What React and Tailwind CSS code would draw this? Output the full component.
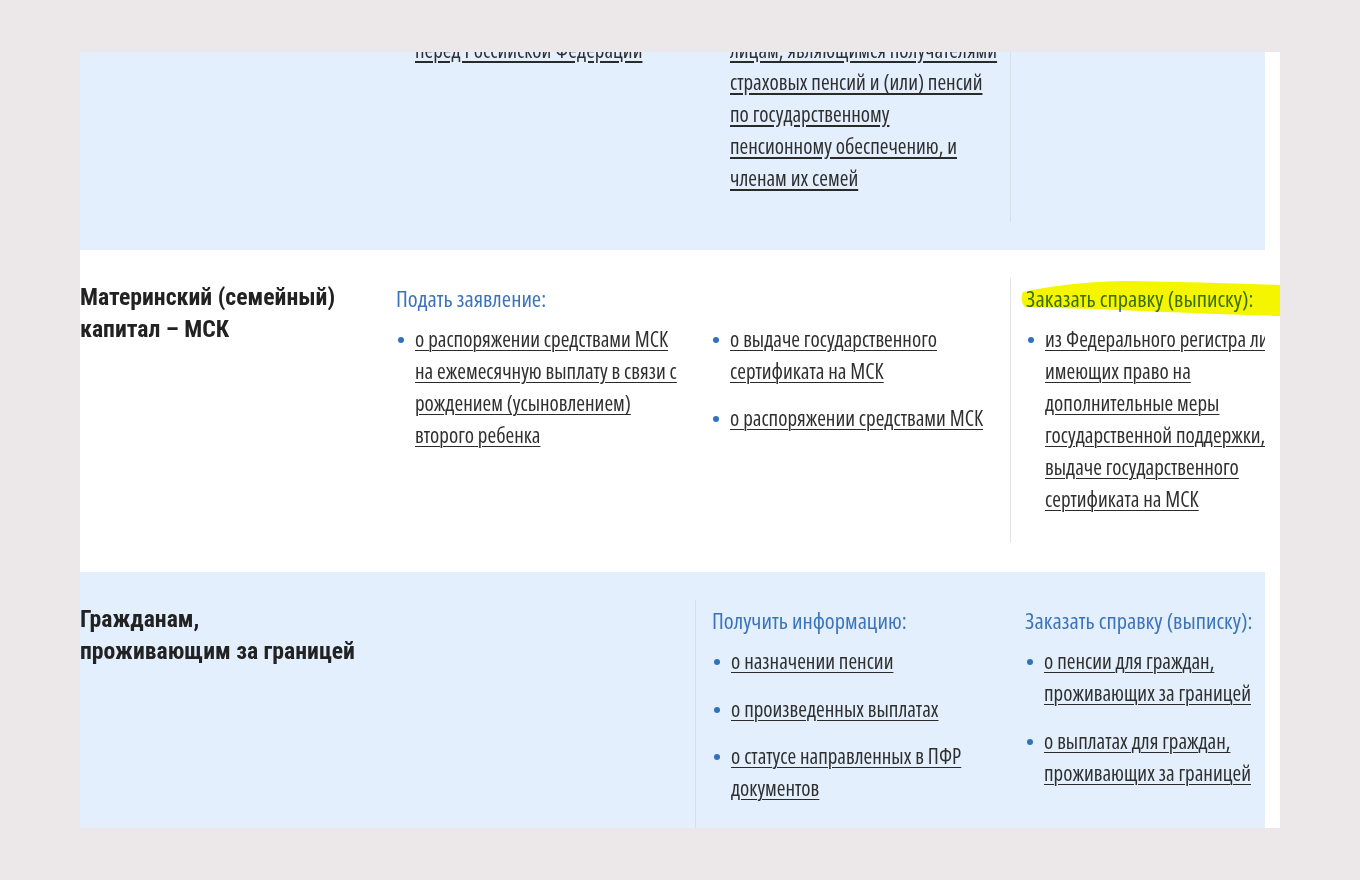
const body = "font-['Open_Sans',sans-serif] font-stretch-condensed";
const head = "font-['Roboto',sans-serif] font-stretch-condensed";

function Item({ lines, first, gap = "mt-[15px]" }) {
  return (
    <li className={"relative pl-[19px] " + (first ? "" : gap)}>
      <span className="absolute left-[2px] top-[14px] h-[6px] w-[6px] rounded-full bg-[#2f73bd]" />
      <span className="underline decoration-[#2a2a2a] decoration-1 underline-offset-[3px]">
        {lines.map((l, i) => (
          <span key={i}>
            {l}
            {i < lines.length - 1 && <br />}
          </span>
        ))}
      </span>
    </li>
  );
}

function Heading({ children }) {
  return (
    <div className={body + " text-[22.5px] leading-[42px] text-[#3b74bb] whitespace-nowrap"}>
      {children}
    </div>
  );
}

function List({ children }) {
  return (
    <ul className={body + " mt-[3px] text-[21px] leading-[32px] text-[#2f2f2f] whitespace-nowrap"}>
      {children}
    </ul>
  );
}

function Title({ lines }) {
  return (
    <div className={head + " pt-[3px] text-[23.7px] leading-[32px] font-bold text-[#222] whitespace-nowrap"}>
      {lines.map((l, i) => (
        <div key={i}>{l}</div>
      ))}
    </div>
  );
}

export default function App() {
  return (
    <div className="min-h-screen bg-[#ece8e9] pt-[52px]">
      <div className="relative ml-[80px] h-[776px] w-[1200px] overflow-hidden bg-white">
        {/* row 1 - tail of the previous section */}
        <div className="w-[1185px] overflow-hidden bg-[#e3effc] pb-7">
          <div className="-mt-[18px] grid grid-cols-[300px_315px_315px_315px]">
            <div />
            <div className="pl-4 pb-7">
              <div className={body + " pl-[19px] text-[21px] leading-[32px] text-[#2f2f2f] whitespace-nowrap"}>
                <span className="underline decoration-[#2a2a2a] underline-offset-[3px]">
                  перед Российской Федерации
                </span>
              </div>
            </div>
            <div className="pl-4 pb-7">
              <div className={body + " pl-[19px] text-[21px] leading-[32px] text-[#2f2f2f] whitespace-nowrap"}>
                <span className="underline decoration-[#2a2a2a] underline-offset-[3px]">
                  лицам, являющимся получателями
                  <br />
                  страховых пенсий и (или) пенсий
                  <br />
                  по государственному
                  <br />
                  пенсионному обеспечению, и
                  <br />
                  членам их семей
                </span>
              </div>
            </div>
            <div className="border-l border-[#d6dee8] pl-4 pb-7" />
          </div>
        </div>

        {/* row 2 */}
        <div className="w-[1185px] overflow-hidden bg-white pt-7 pb-[29px]">
          <div className="grid grid-cols-[300px_315px_315px_315px]">
            <div>
              <Title lines={["Материнский (семейный)", "капитал – МСК"]} />
            </div>
            <div className="pl-4 pb-7">
              <Heading>Подать заявление:</Heading>
              <List>
                <Item
                  first
                  lines={[
                    "о распоряжении средствами МСК",
                    "на ежемесячную выплату в связи с",
                    "рождением (усыновлением)",
                    "второго ребенка",
                  ]}
                />
              </List>
            </div>
            <div className="pl-4 pb-7">
              <div className="h-[42px]" />
              <List>
                <Item first lines={["о выдаче государственного", "сертификата на МСК"]} />
                <Item lines={["о распоряжении средствами МСК"]} />
              </List>
            </div>
            <div className="border-l border-[#e4e4e4] pl-[15px] pb-7">
              <Heading>Заказать справку (выписку):</Heading>
              <List>
                <Item
                  first
                  lines={[
                    "из Федерального регистра лиц,",
                    "имеющих право на",
                    "дополнительные меры",
                    "государственной поддержки,",
                    "выдаче государственного",
                    "сертификата на МСК",
                  ]}
                />
              </List>
            </div>
          </div>
        </div>

        {/* row 3 */}
        <div className="w-[1185px] overflow-hidden bg-[#e3effc] pt-7 pb-7">
          <div className="grid grid-cols-[300px_315px_315px_315px]">
            <div>
              <Title lines={["Гражданам,", "проживающим за границей"]} />
            </div>
            <div />
            <div className="border-l border-[#d6dee8] pl-4 pb-7">
              <Heading>Получить информацию:</Heading>
              <List>
                <Item first lines={["о назначении пенсии"]} />
                <Item gap="mt-[16px]" lines={["о произведенных выплатах"]} />
                <Item lines={["о статусе направленных в ПФР", "документов"]} />
              </List>
            </div>
            <div className="pl-[15px] pb-7">
              <Heading>Заказать справку (выписку):</Heading>
              <List>
                <Item first lines={["о пенсии для граждан,", "проживающих за границей"]} />
                <Item gap="mt-[16px]" lines={["о выплатах для граждан,", "проживающих за границей"]} />
              </List>
            </div>
          </div>
        </div>

        {/* marker highlight */}
        <svg
          className="pointer-events-none absolute left-[940px] top-[226px] mix-blend-multiply"
          width="262"
          height="40"
          viewBox="0 0 262 40"
        >
          <path
            d="M3 14 C 30 8, 70 3, 110 3 C 160 4, 210 5, 262 7 L 262 38 C 220 37, 170 35, 120 33 C 80 31, 40 30, 5 29 C 1 25, 1 18, 3 14 Z"
            fill="#f6f500"
          />
        </svg>
      </div>
    </div>
  );
}
